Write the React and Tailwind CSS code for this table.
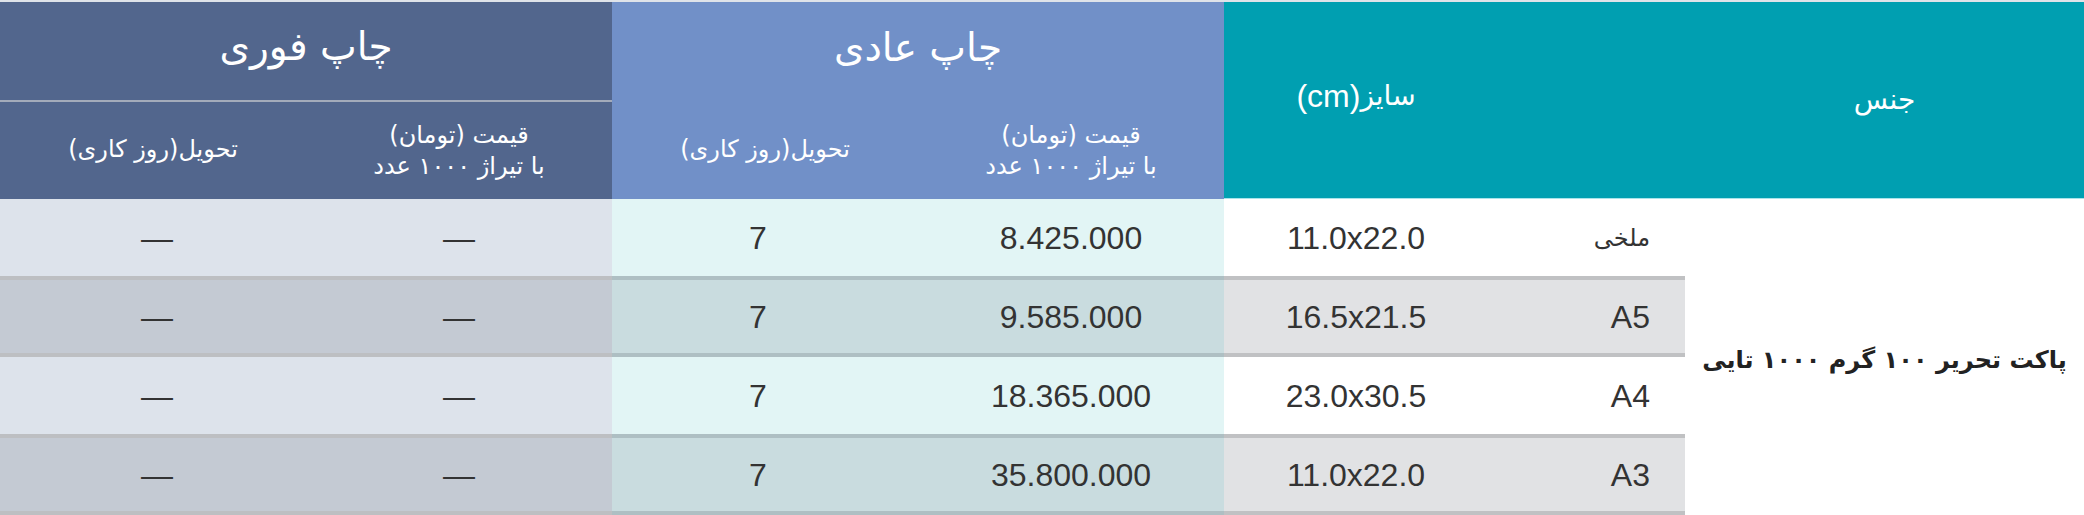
import React from 'react';

const rows = [
  { name: 'ملخی', latin: false, size: '11.0x22.0', price: '8.425.000', days: '7', gray: false },
  { name: 'A5', latin: true, size: '16.5x21.5', price: '9.585.000', days: '7', gray: true },
  { name: 'A4', latin: true, size: '23.0x30.5', price: '18.365.000', days: '7', gray: false },
  { name: 'A3', latin: true, size: '11.0x22.0', price: '35.800.000', days: '7', gray: true },
];

const HeadSub = () => (
  <>
    <div className="flex flex-col items-center justify-center font-['DejaVu_Sans',sans-serif] text-[24px] leading-[31px] text-white">
      <span>قیمت (تومان)</span>
      <span>با تیراژ ۱۰۰۰ عدد</span>
    </div>
    <div className="flex items-center justify-center pb-1 font-['DejaVu_Sans',sans-serif] text-[24px] text-white">
      تحویل(روز کاری)
    </div>
  </>
);

export default function App() {
  return (
    <div className="w-[2084px] bg-white pb-[2px] font-['Liberation_Sans',sans-serif]" dir="rtl">
      <div className="grid grid-cols-[399px_197px_264px_306px_306px_306px_306px] grid-rows-[100px_97px] border-t-2 border-[#dfe3e9]">
        {/* teal header */}
        <div className="col-span-3 row-span-2 grid grid-cols-[399px_197px_264px] border-b border-[#a9e3ea] bg-[#009fb1]">
          <div className="flex items-center justify-center font-['DejaVu_Sans',sans-serif] text-[28px] text-white">جنس</div>
          <div />
          <div className="flex items-center justify-center pb-2 text-white">
            <span className="font-['DejaVu_Sans',sans-serif] text-[28px]">سایز</span>
            <span className="text-[32px]">(cm)</span>
          </div>
        </div>
        {/* normal print */}
        <div className="col-span-2 flex items-center justify-center bg-[#7190c8] pb-2 font-['DejaVu_Sans',sans-serif] text-[39px] text-white">
          چاپ عادی
        </div>
        {/* fast print */}
        <div className="col-span-2 flex items-center justify-center border-b-2 border-[#a3abba] bg-[#52668d] pb-2 font-['DejaVu_Sans',sans-serif] text-[39px] text-white">
          چاپ فوری
        </div>
        <div className="col-span-2 grid grid-cols-2 bg-[#7190c8]">
          <HeadSub />
        </div>
        <div className="col-span-2 grid grid-cols-2 bg-[#52668d]">
          <HeadSub />
        </div>
      </div>

      <div className="grid grid-cols-[399px_197px_264px_306px_306px_306px_306px] grid-rows-[77px_81px_77px_81px] text-[32px] text-[#333]">
        <div className="row-span-4 flex items-center justify-center bg-white pt-[6px] font-['DejaVu_Sans',sans-serif] text-[24px] font-bold text-[#222]">
          پاکت تحریر ۱۰۰ گرم ۱۰۰۰ تایی
        </div>
        {rows.map((r) => (
          <React.Fragment key={r.price}>
            <div
              className={`flex items-center justify-start pr-[35px] ${r.latin ? '' : "font-['DejaVu_Sans',sans-serif] text-[24px]"} ${r.gray ? 'border-y-4 border-[#c0c1c3] bg-[#e1e2e4]' : 'bg-white'}`}
            >
              {r.name}
            </div>
            <div
              className={`flex items-center justify-center ${r.gray ? 'border-y-4 border-[#c0c1c3] bg-[#e1e2e4]' : 'bg-white'}`}
              dir="ltr"
            >
              {r.size}
            </div>
            <div
              className={`flex items-center justify-center ${r.gray ? 'border-y-4 border-[#aebfc3] bg-[#c9dcdf]' : 'bg-[#e2f5f5]'}`}
              dir="ltr"
            >
              {r.price}
            </div>
            <div
              className={`flex items-center justify-center pr-[14px] ${r.gray ? 'border-y-4 border-[#aebfc3] bg-[#c9dcdf]' : 'bg-[#e2f5f5]'}`}
            >
              {r.days}
            </div>
            <div
              className={`flex items-center justify-center ${r.gray ? 'border-y-4 border-[#bdbfc2] bg-[#c4cad3]' : 'bg-[#dde3eb]'}`}
            >
              —
            </div>
            <div
              className={`flex items-center justify-center pl-[8px] ${r.gray ? 'border-y-4 border-[#bdbfc2] bg-[#c4cad3]' : 'bg-[#dde3eb]'}`}
            >
              —
            </div>
          </React.Fragment>
        ))}
      </div>
    </div>
  );
}
